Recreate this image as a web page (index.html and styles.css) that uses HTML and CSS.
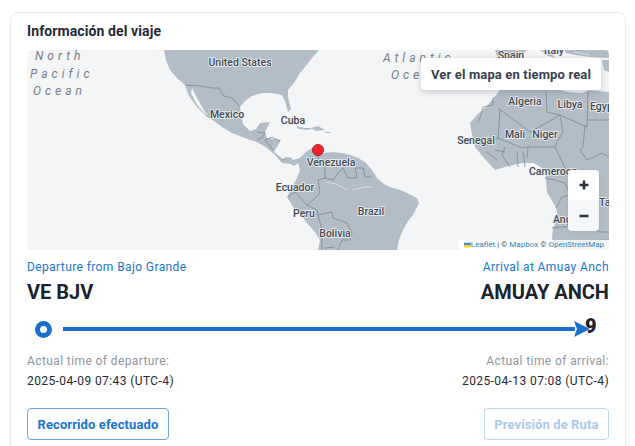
FILE: index.html
```html
<!DOCTYPE html>
<html lang="es">
<head>
<meta charset="utf-8">
<title>Información del viaje</title>
<link rel="stylesheet" href="styles.css">
</head>
<body>
<section class="card">
  <h2 class="title">Información del viaje</h2>
  <div class="map">
    <svg class="map-art" viewBox="27 50 582 200" width="582" height="200" aria-hidden="true">
      <rect class="sea" x="27" y="50" width="582" height="200"/>
      <g class="land">
        <path d="M164 50L166 60L170 70L178 79L185 85L189 96L196 106L207 117L214 121L222 127L232 133L245 138L250 140L257 142L267 148L275 155L282 163L290 164L294 166L298 163L300 170L297 178L293 185L287 197L293 207L300 214L307 223L315 232L320 240L318 250L397 250L399 240L403 230L408 221L413 215L419 203L417 198L403 191L390 187L384 184L377 178L372 170L365 162L358 158L350 155L342 153L333 152L324 153L315 153L312 148L306 152L303 155L300 158L293 160L290 157L283 159L274 152L281 140L267 138L265 132L270 122L260 123L256 129L250 131L243 124L241 114L240 107L245 101L252 96L262 93L272 93L282 95L285 101L288 112L291 109L288 97L288 90L294 83L300 73L305 67L312 58L319 50Z"/>
        <path d="M192 88L197 98L205 112L209 116L203 112L196 103L191 93Z" class="sea-cut"/>
        <path d="M296 126L305 128L313 128L308 130L299 129Z"/>
        <path d="M311 128L318 126L325 130L316 131Z"/>
        <path d="M325 132L331 132L330 133L325 133Z"/>
        <path d="M495 50L527 50L521 56L512 60L498 60Z"/>
        <path d="M565 50L609 50L609 58L590 57L575 55L566 53Z"/>
        <path d="M602 60L609 60L609 72L604 70Z"/>
        <path d="M540 50L548 50L556 58L548 56Z"/>
        <path d="M500 90L560 90L568 92L582 93L590 90L609 92L609 250L555 250L552 238L553 228L558 218L556 208L547 192L546 180L545 170L534 163L522 163L505 167L495 170L484 158L475 147L472 135L470 123L478 114L486 107L492 100Z"/>
      </g>
      <g class="river">
        <path d="M326 182L336 184L347 190"/>
        <path d="M353 190L364 187L373 187"/>
        <path d="M574 52L590 55"/>
      </g>
      <g class="border">
        <path d="M185 85L200 86L212 88L219 88L224 96L232 98L240 107"/>
        <path d="M257 132L265 133L262 138L257 140M265 140L273 150M265 140L272 137L280 141"/>
        <path d="M283 160L287 157"/>
        <path d="M315 153L325 168L325 178L318 180L320 193L313 200L307 205L295 192L288 197"/>
        <path d="M325 178L333 180L338 173L343 168L348 178L357 178L355 168L363 168L365 177L372 177"/>
        <path d="M307 205L317 210L318 215L332 212L333 218L347 223L352 233L350 240L342 240L338 250"/>
        <path d="M318 215L322 230L322 250M325 248L335 247"/>
        <path d="M493 97L493 105L483 107L480 118L478 122"/>
        <path d="M498 108L530 132L543 125L560 115L587 127L588 92"/>
        <path d="M546 92L547 112L560 115L563 132L557 142L555 147L528 147L522 148L498 138L500 110"/>
        <path d="M555 147L560 157L566 170M585 125L583 147L580 150L587 160L602 153L609 157"/>
        <path d="M588 120L609 120M498 138L487 145"/>
        <path d="M505 147L502 155L510 167M517 152L518 167M523 152L525 167M528 147L527 158M495 150L505 152M487 152L497 160"/>
        <path d="M545 178L555 180L565 183L570 195L562 197L556 208"/>
        <path d="M552 228L585 225L600 232L609 232M555 242L609 240"/>
      </g>
      <g class="label-ocean">
        <text x="35" y="60">North</text>
        <text x="30" y="78">Pacific</text>
        <text x="33" y="95">Ocean</text>
        <text x="383" y="62">Atlantic</text>
        <text x="391" y="79">Ocean</text>
      </g>
      <g class="label">
        <text x="240" y="66" text-anchor="middle">United States</text>
        <text x="227" y="118" text-anchor="middle">Mexico</text>
        <text x="293" y="124" text-anchor="middle">Cuba</text>
        <text x="331" y="166" text-anchor="middle">Venezuela</text>
        <text x="295" y="191" text-anchor="middle">Ecuador</text>
        <text x="304" y="217" text-anchor="middle">Peru</text>
        <text x="371" y="215" text-anchor="middle">Brazil</text>
        <text x="335" y="237" text-anchor="middle">Bolivia</text>
        <text x="511" y="59" text-anchor="middle">Spain</text>
        <text x="554" y="54" text-anchor="middle">Italy</text>
        <text x="525" y="105" text-anchor="middle">Algeria</text>
        <text x="570" y="108" text-anchor="middle">Libya</text>
        <text x="590" y="110">Egypt</text>
        <text x="476" y="144" text-anchor="middle">Senegal</text>
        <text x="515" y="138" text-anchor="middle">Mali</text>
        <text x="545" y="138" text-anchor="middle">Niger</text>
        <text x="529" y="175">Cameroon</text>
        <text x="553" y="223">Angola</text>
        <text x="599" y="206">Tanzania</text>
      </g>
      <circle class="marker" cx="318" cy="150" r="5.5"/>
    </svg>
    <a class="live-btn">Ver el mapa en tiempo real</a>
    <div class="zoom">
      <span class="zoom-btn">
        <svg viewBox="0 0 12 12" width="12" height="12"><path d="M6 1.5v9M1.5 6h9"/></svg>
      </span>
      <span class="zoom-btn zoom-off">
        <svg viewBox="0 0 12 12" width="12" height="12"><path d="M1.5 6h9"/></svg>
      </span>
    </div>
    <div class="attribution">
      <svg class="flag" viewBox="0 0 12 8" width="8" height="6"><rect width="12" height="4" fill="#4c7be1"/><rect y="4" width="12" height="4" fill="#ffd500"/></svg>
      <span><span class="att-link">Leaflet</span> | © <span class="att-link">Mapbox</span> © <span class="att-link">OpenStreetMap</span></span>
    </div>
  </div>

  <div class="ports">
    <div class="port">
      <div class="port-label">Departure from Bajo Grande</div>
      <div class="port-name">VE BJV</div>
    </div>
    <div class="port port-end">
      <div class="port-label">Arrival at Amuay Anch</div>
      <div class="port-name">AMUAY ANCH</div>
    </div>
  </div>

  <div class="route">
    <span class="route-dot"></span>
    <span class="route-line"></span>
    <svg class="route-arrow" viewBox="0 0 16 16" width="16" height="16" aria-hidden="true"><path d="M0 0L16 8L0 16L3 8Z"/></svg>
    <span class="route-end">9</span>
  </div>

  <div class="times">
    <div class="time">
      <div class="time-label">Actual time of departure:</div>
      <div class="time-value">2025-04-09 07:43 (UTC-4)</div>
    </div>
    <div class="time time-end">
      <div class="time-label">Actual time of arrival:</div>
      <div class="time-value">2025-04-13 07:08 (UTC-4)</div>
    </div>
  </div>

  <div class="actions">
    <button class="btn">Recorrido efectuado</button>
    <button class="btn btn-disabled">Previsión de Ruta</button>
  </div>
</section>
</body>
</html>
```
FILE: styles.css
```css
* { box-sizing: border-box; }
html, body { height: 100%; }
body {
  margin: 0;
  background: #fff;
  font-family: Roboto, "Liberation Sans", sans-serif;
  overflow: hidden;
}
.card {
  width: 616px;
  margin: 12px 0 0 10px;
  padding: 8px 16px 16px;
  border: 1px solid #e9ebee;
  border-radius: 8px;
  background: #fff;
}
.title {
  margin: 0 0 9px;
  font-size: 14px;
  line-height: 20px;
  font-weight: 700;
  letter-spacing: .1px;
  color: #1f2937;
}
.map {
  position: relative;
  height: 200px;
  border-radius: 4px;
  overflow: hidden;
}
.map-art { display: block; }
.sea { fill: #f4f5f6; }
.land { fill: #b3bdc8; }
.land .sea-cut { fill: #f4f5f6; }
.river { fill: none; stroke: #e6e9ec; stroke-width: .7; }
.border { fill: none; stroke: #758089; stroke-width: .7; }
.label text {
  font-size: 10.5px;
  font-weight: 500;
  fill: #3f4954;
  stroke: #f0f2f4;
  stroke-width: 1.6px;
  paint-order: stroke;
}
.label-ocean text {
  font-size: 12px;
  font-style: italic;
  letter-spacing: 4px;
  fill: #777e85;
}
.marker { fill: #f5212a; stroke: #a6252b; stroke-width: 1; }
.live-btn {
  position: absolute;
  top: 8px;
  right: 8px;
  width: 180px;
  height: 32px;
  display: flex;
  align-items: center;
  justify-content: center;
  border-radius: 4px;
  background: #fff;
  box-shadow: 0 2px 6px rgba(60, 72, 88, .25);
  font-size: 13px;
  font-weight: 700;
  letter-spacing: .15px;
  color: #374151;
}
.zoom {
  position: absolute;
  top: 120px;
  right: 10px;
  width: 31px;
  border-radius: 4px;
  overflow: hidden;
  box-shadow: 0 1px 5px rgba(60, 72, 88, .12);
}
.zoom-btn {
  display: flex;
  align-items: center;
  justify-content: center;
  height: 30px;
  background: #fff;
}
.zoom-off { height: 31px; background: #f5f6f7; }
.zoom-btn path { fill: none; stroke: #27313b; stroke-width: 2.6; }
.attribution {
  position: absolute;
  right: 0;
  bottom: 0;
  height: 10px;
  width: 150px;
  padding: 0 5px;
  display: flex;
  align-items: center;
  justify-content: space-between;
  background: rgba(255, 255, 255, .85);
  font-size: 8px;
  line-height: 10px;
  white-space: nowrap;
  color: #4b5563;
}
.att-link { color: #2c84b8; }
.ports {
  display: flex;
  justify-content: space-between;
  margin-top: 9px;
}
.port-end { text-align: right; }
.port-label {
  font-size: 12px;
  line-height: 16px;
  letter-spacing: .4px;
  color: #1976d2;
}
.port-name {
  margin-top: 5px;
  font-size: 20px;
  line-height: 24px;
  font-weight: 700;
  color: #1a2330;
}
.route {
  display: flex;
  align-items: center;
  height: 24px;
  margin-top: 13px;
  padding: 0 12px 0 8px;
}
.route-dot {
  flex: none;
  width: 17px;
  height: 17px;
  border: 5px solid #1a6fce;
  border-radius: 50%;
  background: #fff;
}
.route-line {
  flex: 1;
  height: 4px;
  margin-left: 11px;
  background: #1a6fce;
}
.route-arrow { flex: none; margin-left: -1px; }
.route-arrow path { fill: #1a6fce; }
.route-end {
  flex: none;
  width: 12px;
  margin-left: -5px;
  margin-top: -7px;
  font-size: 20px;
  line-height: 20px;
  font-weight: 900;
  color: #1a2330;
}
.times {
  display: flex;
  justify-content: space-between;
  margin-top: 12px;
}
.time-end { text-align: right; }
.time-label {
  font-size: 12px;
  line-height: 16px;
  letter-spacing: .4px;
  color: #8f959e;
}
.time-value {
  margin-top: 4px;
  font-size: 12px;
  line-height: 16px;
  letter-spacing: .4px;
  color: #1f2937;
}
.actions {
  display: flex;
  justify-content: space-between;
  margin-top: 19px;
}
.btn {
  height: 32px;
  padding: 0 9.5px;
  border: 1px solid #6fa5df;
  border-radius: 4px;
  background: #fff;
  font-family: inherit;
  font-size: 13px;
  font-weight: 700;
  letter-spacing: .1px;
  color: #1976d2;
}
.btn-disabled {
  border-color: #bcd6f1;
  color: #a9c9ec;
}
```
